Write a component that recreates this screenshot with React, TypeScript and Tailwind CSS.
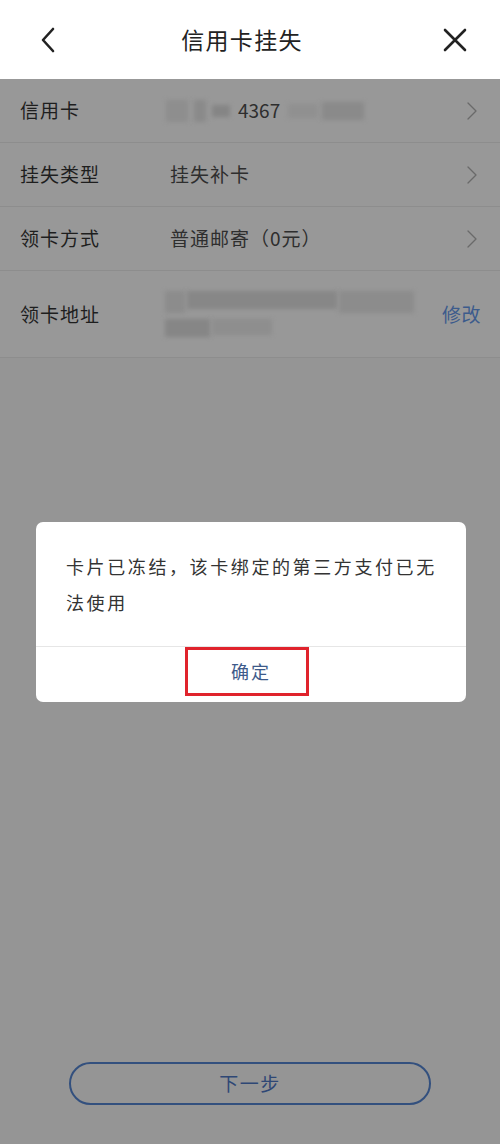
import React from "react";

const font = { fontFamily: '"Noto Sans CJK SC", "Noto Sans", sans-serif' };

function Chevron() {
  return (
    <svg width="12" height="20" viewBox="0 0 12 20" fill="none">
      <path d="M2 2 L10 10 L2 18" stroke="#6a6a6a" strokeWidth="1.3" strokeLinecap="round" strokeLinejoin="round" />
    </svg>
  );
}

function Blur({ w, h, c = "#8a8a8a" }: { w: number; h: number; c?: string }) {
  return <div className="blur-[2px]" style={{ width: w, height: h, background: c }} />;
}

function Row({ label, children, chevron = true }: { label: string; children: React.ReactNode; chevron?: boolean }) {
  return (
    <div className="flex items-center h-[64px] border-b border-[#8d8d8d] bg-[#989898] pl-[20px] pr-[22px]">
      <div className="w-[150px] text-[19px] text-[#1e1e1e] tracking-[1px]">{label}</div>
      <div className="flex-1 flex items-center text-[19px] text-[#2e2e2e] tracking-[1px]">{children}</div>
      {chevron && <Chevron />}
    </div>
  );
}

export default function App() {
  return (
    <div className="relative w-[500px] h-[1144px] bg-[#959595] flex flex-col overflow-hidden" style={font}>
      {/* header */}
      <div className="h-[79px] bg-white flex items-center justify-between px-[38px] shrink-0">
        <svg width="20" height="26" viewBox="0 0 20 26" fill="none">
          <path d="M15 2 L5 13 L15 24" stroke="#222" strokeWidth="2.6" strokeLinecap="round" strokeLinejoin="round" />
        </svg>
        <div className="text-[23px] text-[#222] tracking-[1.3px] ml-[-16px]">信用卡挂失</div>
        <svg width="26" height="26" viewBox="0 0 26 26" fill="none" className="mr-[-6px]">
          <path d="M3 3 L23 23 M23 3 L3 23" stroke="#222" strokeWidth="2.6" strokeLinecap="round" />
        </svg>
      </div>

      {/* rows */}
      <Row label="信用卡">
        <div className="flex items-center gap-[8px] ml-[-4px]">
          <div className="flex items-center gap-[6px]">
            <Blur w={22} h={22} c="#8e8e8e" />
            <Blur w={12} h={22} c="#8a8a8a" />
            <Blur w={18} h={12} c="#858585" />
          </div>
          <span className="tracking-[0px]">4367</span>
          <div className="flex items-center gap-[4px]">
            <Blur w={30} h={14} c="#909090" />
            <Blur w={42} h={18} c="#8a8a8a" />
          </div>
        </div>
      </Row>
      <Row label="挂失类型">挂失补卡</Row>
      <Row label="领卡方式">普通邮寄（0元）</Row>
      <div className="flex items-center h-[87px] border-b border-[#8d8d8d] bg-[#989898] pl-[20px] pr-[19px]">
        <div className="w-[145px] text-[19px] text-[#1e1e1e] tracking-[1px]">领卡地址</div>
        <div className="flex-1 flex flex-col gap-[6px]">
          <div className="flex gap-[2px]">
            <Blur w={20} h={22} c="#8c8c8c" />
            <Blur w={150} h={18} c="#878787" />
            <Blur w={75} h={22} c="#8c8c8c" />
          </div>
          <div className="flex gap-[2px]">
            <Blur w={45} h={18} c="#868686" />
            <Blur w={60} h={16} c="#8e8e8e" />
          </div>
        </div>
        <div className="text-[19px] text-[#3c5b8c] ml-[14px] tracking-[0.5px]">修改</div>
      </div>

      <div className="flex-1" />

      {/* bottom button */}
      <div className="flex justify-center pb-[39px]">
        <div className="w-[362px] h-[43px] rounded-full border-[2px] border-[#33507e] flex items-center justify-center text-[19px] text-[#2e4775] tracking-[1.5px]">
          下一步
        </div>
      </div>

      {/* dialog */}
      <div className="absolute left-[36px] top-[522px] w-[430px] h-[180px] bg-white rounded-[7px] flex flex-col">
        <div className="pl-[30px] pr-[10px] pt-[26px] text-[18px] leading-[36px] text-[#333] tracking-[2.6px] h-[125px] border-b border-[#e6e6e6]">
          卡片已冻结，该卡绑定的第三方支付已无
          <br />
          法使用
        </div>
        <div className="flex-1 flex items-center justify-center">
          <div className="w-[124px] h-[49px] border-[3px] border-[#e0232c] flex items-center justify-center text-[18px] text-[#3d5a8a] tracking-[2px] pl-[8px] mt-[-6px] ml-[-8px]">
            确定
          </div>
        </div>
      </div>
    </div>
  );
}
